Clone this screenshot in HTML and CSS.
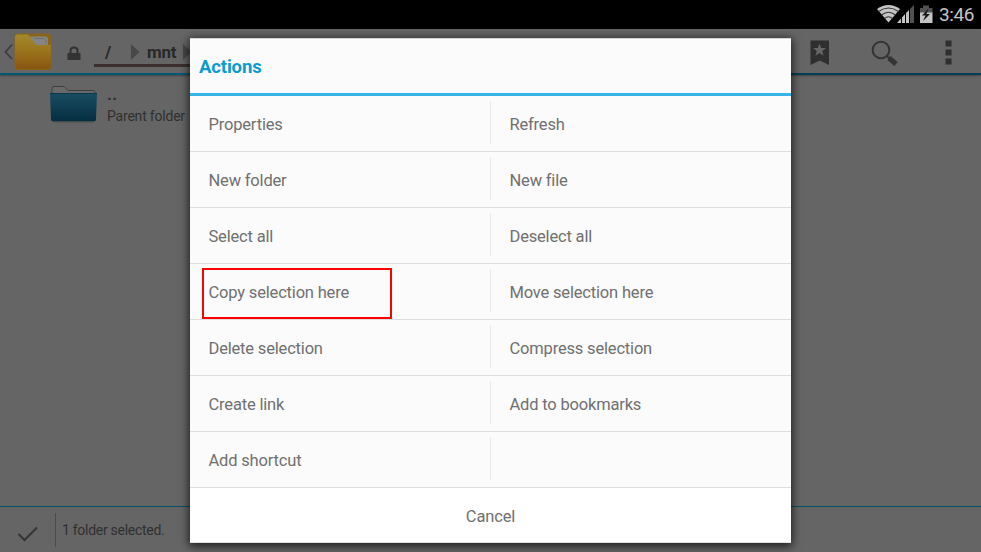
FILE: index.html
```html
<!DOCTYPE html>
<html lang="en">
<head>
<meta charset="utf-8">
<title>File manager</title>
<link rel="stylesheet" href="styles.css">
</head>
<body>
<div class="screen">
  <header class="status">
    <svg class="status-icons" width="57" height="29" viewBox="0 0 57 29">
      <path d="M0 9Q11.500 1 23 9L11.500 22.500Z" fill="#c4c4c4"/>
      <path d="M1.500 11.500Q11.500 4.500 21.500 11.500M4.500 15Q11.500 9.500 18.500 15M7.500 18.500Q11.500 15 15.500 18.500" fill="none" stroke="#333" stroke-width="1.100"/>
      <path d="M20 23L24 18.500V23ZM25 23V17.500L28 14V23ZM29 23V13L32 10V23Z" fill="#c4c4c4"/>
      <path d="M33 23V9L37 5V23Z" fill="#505050"/>
      <path d="M43 8H46V5.500H52V8H55.500V13H43Z" fill="#505050"/>
      <path d="M43 12.500H55.500V23H43Z" fill="#c4c4c4"/>
      <path d="M51.500 8.500L45 15.500H48.500L46 21L53 14H49.500Z" fill="#181818"/>
    </svg>
    <span class="clock">3:46</span>
  </header>
  <div class="toolbar">
    <svg class="back" width="10" height="18" viewBox="0 0 10 18"><path d="M8 1.500L1.500 9L8 16" fill="none" stroke="#3e3e3e" stroke-width="1.800"/></svg>
    <svg class="app-icon" width="38" height="38" viewBox="0 0 38 38">
      <defs><linearGradient id="gold" x2="0" y2="1"><stop stop-color="#a28a2b"/><stop offset=".5" stop-color="#9a731b"/><stop offset="1" stop-color="#875511"/></linearGradient></defs>
      <rect x=".5" y=".5" width="37" height="36.500" rx="4" fill="#8a6518"/>
      <path d="M15 3.500H31Q34 3.500 34 6.500V12H21Z" fill="#858585"/>
      <path d="M20 5.500H29Q32 5.500 32 10" fill="none" stroke="#707070"/>
      <path d="M1 4Q1 1.500 4 1.500H14L21 10.500Q22 12 24 12H37V32Q37 36 33 36H5Q1 36 1 32Z" fill="url(#gold)"/>
    </svg>
    <svg class="lock" width="14" height="15" viewBox="0 0 14 15"><path d="M.5 7H13.500V14H.5Z" fill="#333"/><path d="M3.500 8V4.500Q3.500 1.500 7 1.500T10.500 4.500V8" fill="none" stroke="#333" stroke-width="2"/></svg>
    <div class="crumbs">
      <span class="slash">/</span>
      <svg width="9" height="16" viewBox="0 0 9 16"><path d="M0 0L8.500 8L0 16Z" fill="#484848"/></svg>
      <span class="crumb">mnt</span>
      <svg width="9" height="16" viewBox="0 0 9 16"><path d="M0 0L8.500 8L0 16Z" fill="#484848"/></svg>
    </div>
    <div class="tools">
      <svg width="20" height="26" viewBox="0 0 20 26"><path d="M.5 .5H19V25L9.700 20.500L.5 25Z" fill="#2f2f2f"/><path d="M9.500 3.500L11.200 8.100H16L12.200 11L13.600 15.800L9.500 13L5.400 15.800L6.800 11L3 8.100H7.800Z" fill="#656565"/></svg>
      <svg width="28" height="27" viewBox="0 0 28 27"><circle cx="10" cy="10" r="8.300" fill="none" stroke="#343434" stroke-width="2.100"/><path d="M15.500 15.500L18.500 18.500" stroke="#343434" stroke-width="2"/><path d="M18 18L25 24" stroke="#343434" stroke-width="5"/></svg>
      <svg width="7" height="25" viewBox="0 0 7 25"><path d="M.5 .5H6.500V6.500H.5ZM.5 9.500H6.500V15.500H.5ZM.5 18.500H6.500V24.500H.5Z" fill="#2f2f2f"/></svg>
    </div>
  </div>
  <main class="files">
    <div class="parent">
      <svg width="49" height="39" viewBox="0 0 49 39">
        <defs><linearGradient id="blue" x2="0" y2="1"><stop stop-color="#194d62"/><stop offset="1" stop-color="#062d40"/></linearGradient></defs>
        <path d="M3 9V3.500Q3 1.500 5 1.500H15L19 5.500H44Q46 5.500 46 8" fill="#696969" stroke="#3e3e3e"/>
        <path d="M1 8H48L47 34Q47 36.500 44.500 36.500H4.500Q2 36.500 2 34Z" fill="url(#blue)"/>
        <path d="M1 8.500H48" stroke="#09384b"/>
        <path d="M4 37H45" stroke="#505050"/>
      </svg>
      <div class="parent-text"><b>..</b><span>Parent folder</span></div>
    </div>
  </main>
  <footer class="selection">
    <svg class="check" width="22" height="16" viewBox="0 0 22 16"><path d="M1.500 8L7.500 14L20 1.500" fill="none" stroke="#343434" stroke-width="2"/></svg>
    <span class="selected">1 folder selected.</span>
  </footer>
  <section class="dialog">
    <h1>Actions</h1>
    <div class="grid">
      <div>Properties</div><div>Refresh</div>
      <div>New folder</div><div>New file</div>
      <div>Select all</div><div>Deselect all</div>
      <div class="marked">Copy selection here</div><div>Move selection here</div>
      <div>Delete selection</div><div>Compress selection</div>
      <div>Create link</div><div>Add to bookmarks</div>
      <div>Add shortcut</div><div></div>
    </div>
    <div class="cancel">Cancel</div>
  </section>
</div>
</body>
</html>
```
FILE: styles.css
```css
*, *::after { box-sizing: border-box; }
body { margin: 0; font-family: Roboto, "Liberation Sans", sans-serif; background: #656565; }
svg { display: block; flex: none; }
.screen { position: relative; width: 981px; height: 552px; display: flex; flex-direction: column; overflow: hidden; }
.status { height: 29px; background: #000; display: flex; justify-content: flex-end; align-items: center; padding-right: 7px; flex: none; }
.status-icons { margin-right: 5px; }
.clock { color: #c4c4c4; font-size: 19px; line-height: 30px; width: 35px; white-space: nowrap; letter-spacing: -0.4px; }
.toolbar { height: 46px; flex: none; border-bottom: 2px solid; border-image: linear-gradient(90deg, #005873 0 190px, #003f52 190px) 1; box-shadow: 0 1px 2px #444; display: flex; padding-left: 4px; }
.back { margin-top: 14px; }
.app-icon { margin-top: 4px; }
.lock { margin: 17px 0 0 15px; }
.crumbs { flex: none; margin-left: 13px; width: 98px; height: 38px; border-bottom: 3px solid #3b2f2f; display: flex; align-items: center; padding-top: 10px; color: #282828; font-weight: bold; font-size: 17px; letter-spacing: -0.25px; overflow: hidden; }
.slash { width: 37px; padding-left: 11px; }
.crumb { width: 36px; margin-left: 7px; }
.tools { margin-left: auto; padding: 11px 29px 0 0; display: flex; }
.tools svg:nth-child(2) { margin-left: 41px; }
.tools svg:nth-child(3) { margin-left: 46px; }
.files { flex: 1; padding: 10px 0 0 49px; }
.parent { display: flex; gap: 9px; color: #303030; }
.parent-text { display: flex; flex-direction: column; font-size: 14px; line-height: 18px; padding-top: 2px; letter-spacing: -0.2px; }
.parent-text b { font-size: 17px; line-height: 19px; letter-spacing: 0.2px; margin-top: -2px; margin-bottom: 3px; }
.selection { height: 46px; flex: none; border-top: 1px solid #065068; display: flex; align-items: center; color: #303030; font-size: 14px; letter-spacing: -0.28px; }
.check { margin: 8px 0 0 17px; }
.selected { border-left: 1px solid #4b4b4b; margin-left: 16px; padding-left: 6px; height: 34px; line-height: 35px; }
.dialog { position: absolute; left: 190px; top: 38px; width: 601px; height: 505px; background: #fff; box-shadow: 0 2px 9px 1px rgba(0,0,0,.75); color: #707070; font-size: 16.500px; }
h1 { margin: 0; height: 58px; padding-left: 9px; line-height: 56px; font-size: 18.500px; letter-spacing: -0.15px; color: #0a9bd0; background: #fbfbfb; border-top: 1px solid #d5d5d5; border-bottom: 3px solid #36b4e5; }
.grid { display: grid; grid-template-columns: 301px 300px; grid-auto-rows: 56px; background: #fbfbfb; }
.grid div { border-bottom: 1px solid #dedede; padding-left: 18.500px; line-height: 57px; letter-spacing: -0.18px; position: relative; }
.grid div:nth-child(odd) { background: linear-gradient(#e8e8e8, #e8e8e8) right 5px / 1px 43px no-repeat; }
.marked::after { content: ""; position: absolute; left: 12px; top: 4px; width: 190px; height: 51px; border: 2px solid #f00; }
.cancel { height: 55px; line-height: 57px; text-align: center; letter-spacing: -0.15px; border-bottom: 1px solid #e3e3e3; }
```
